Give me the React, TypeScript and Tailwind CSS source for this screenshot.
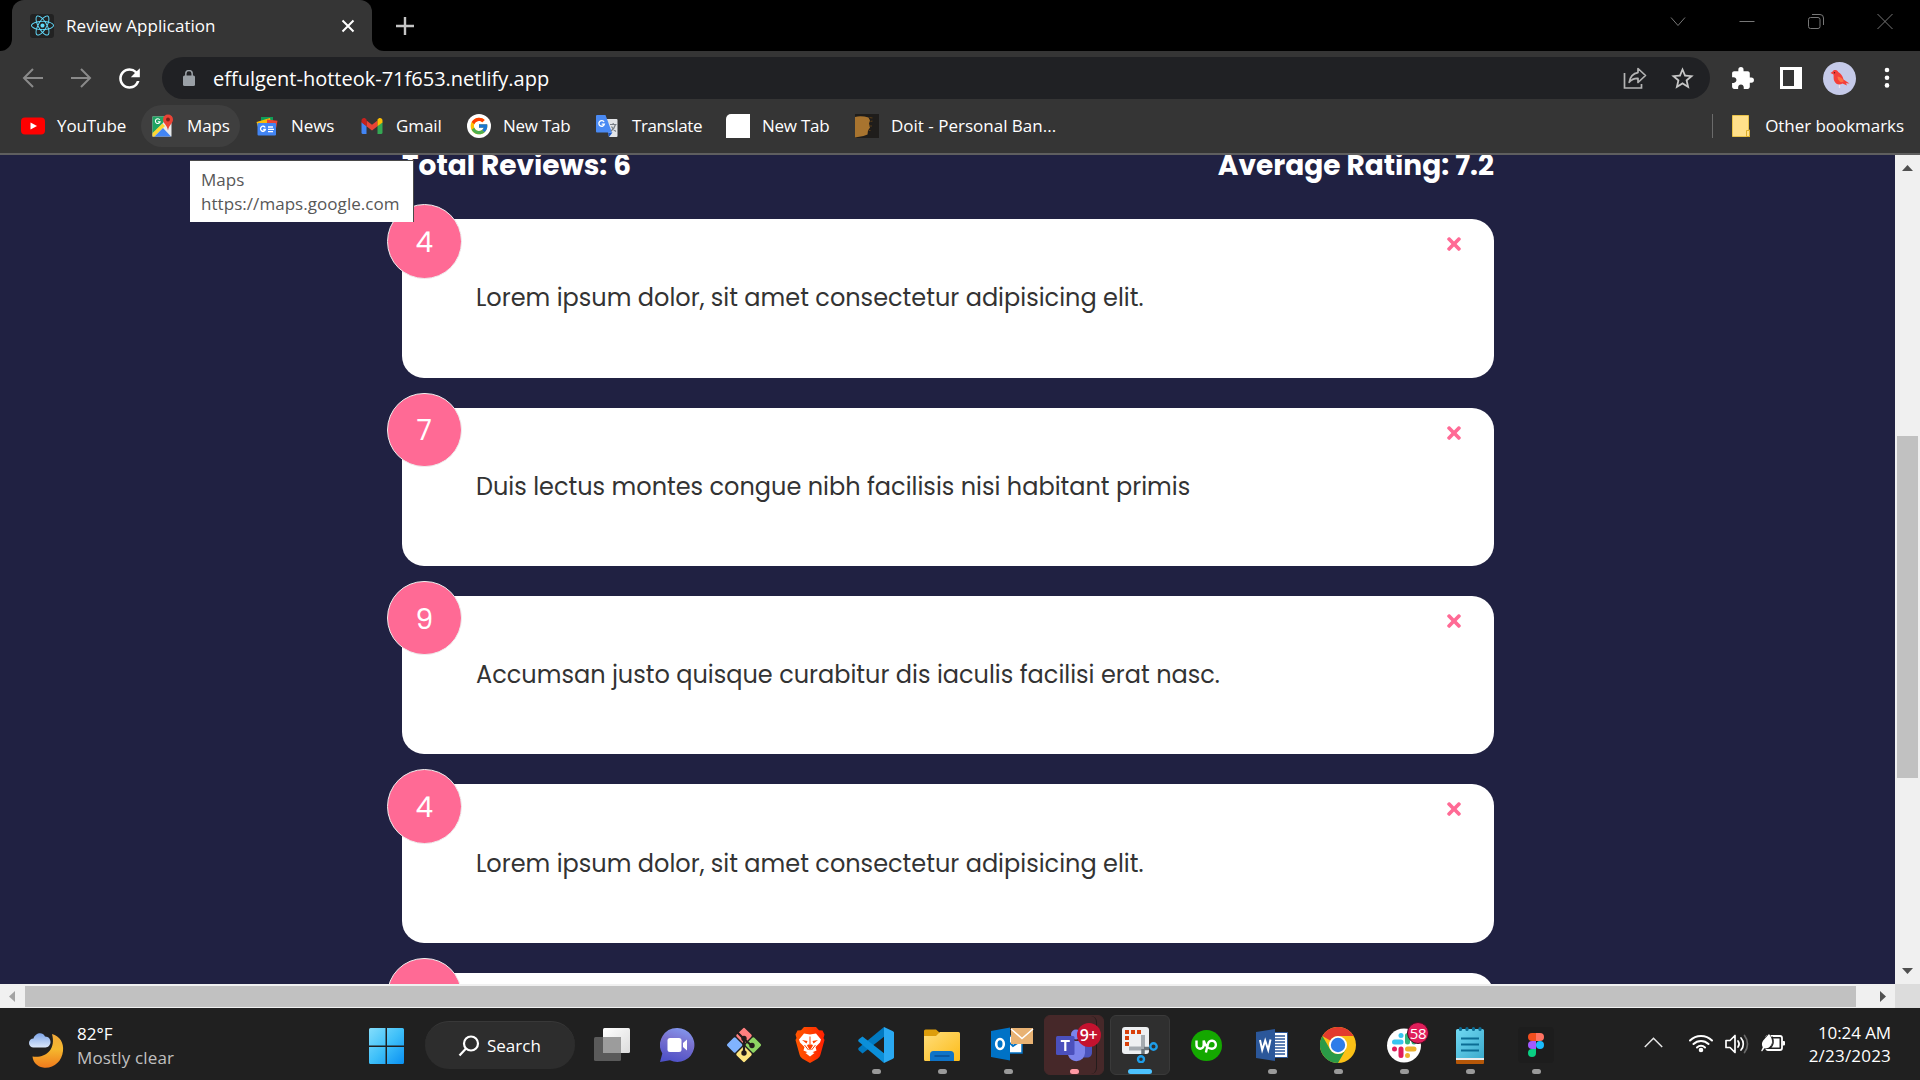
import type { ReactNode } from 'react';
import { FaReact, FaTimes } from 'react-icons/fa';
import { FcGoogle } from 'react-icons/fc';
import { MdExtension, MdRefresh, MdStarBorder } from 'react-icons/md';

/* ---------- Browser: tab strip ---------- */

function TabStrip() {
  return (
    <div className="flex h-[51px] shrink-0 bg-black pl-[12px]">
      <div className="relative flex h-[51px] w-[360px] items-center rounded-t-[12px] bg-[#353535] pl-[18px] pr-[17px]">
        <svg className="absolute -left-[12px] bottom-0 size-[12px]" viewBox="0 0 12 12" fill="#353535">
          <path d="M12 0v12H0A12 12 0 0 0 12 0Z" />
        </svg>
        <svg className="absolute -right-[12px] bottom-0 size-[12px]" viewBox="0 0 12 12" fill="#353535">
          <path d="M0 0v12h12A12 12 0 0 1 0 0Z" />
        </svg>
        <div className="flex size-[24px] items-center justify-center rounded-[3px] bg-[#222222]">
          <FaReact className="size-[23px] text-[#61dafb]" />
        </div>
        <span className="ml-[12px] flex-1 text-[17px] leading-[24px] tracking-[0.05px]">Review Application</span>
        <svg className="size-[14px]" viewBox="0 0 14 14" stroke="#fff" strokeWidth="2" fill="none">
          <path d="M1.5 1.5l11 11M12.5 1.5l-11 11" />
        </svg>
      </div>
      <svg className="ml-[23px] mt-[16px] size-[20px]" viewBox="0 0 20 20" stroke="#c4c4c4" strokeWidth="2.4" fill="none">
        <path d="M10 1v18M1 10h18" />
      </svg>
      <div className="ml-auto flex gap-[53px] pr-[27px] pt-[13px] text-[#777777]">
        <svg className="size-[16px]" viewBox="0 0 16 16" stroke="currentColor" fill="none">
          <path d="M1 4.5l7 8 7-8" />
        </svg>
        <svg className="size-[16px]" viewBox="0 0 16 16" stroke="currentColor" fill="none">
          <path d="M.5 8.5h15" />
        </svg>
        <svg className="size-[16px]" viewBox="0 0 16 16" stroke="currentColor" fill="none">
          <rect x=".5" y="4.5" width="11.5" height="11" rx="2" />
          <path d="M4 1.5h8a3.5 3.5 0 0 1 3.500 3.500v7" />
        </svg>
        <svg className="size-[16px]" viewBox="0 0 16 16" stroke="currentColor" fill="none">
          <path d="M.5 1l15 15M15.500 1l-15 15" />
        </svg>
      </div>
    </div>
  );
}

/* ---------- Browser: address bar ---------- */

function AddressBar() {
  return (
    <div className="flex h-[54px] shrink-0 items-center bg-[#353535] pl-[21px]">
      <svg className="size-[24px]" viewBox="0 0 24 24" stroke="#8a8a8a" strokeWidth="2" fill="none">
        <path d="M22 12H3M12 3l-9 9 9 9" />
      </svg>
      <svg className="ml-[24px] size-[24px]" viewBox="0 0 24 24" stroke="#8a8a8a" strokeWidth="2" fill="none">
        <path d="M2 12h19M12 3l9 9-9 9" />
      </svg>
      <MdRefresh className="ml-[21px] size-[31px] text-white" />
      <div className="ml-[17px] flex h-[42px] w-[1548px] items-center rounded-full bg-[#202124] pl-[20px] pr-[14px]">
        <svg className="size-[16px] w-[14px]" viewBox="0 0 14 16">
          <rect x="1" y="5.500" width="12" height="10.500" rx="1.500" fill="#9aa0a6" />
          <path d="M3.800 6V3.800a3.200 3.200 0 0 1 6.400 0V6" fill="none" stroke="#9aa0a6" strokeWidth="1.500" />
        </svg>
        <span className="ml-[17px] mt-[2px] flex-1 text-[20px] leading-[28px]">effulgent-hotteok-71f653.netlify.app</span>
        <svg className="size-[24px]" viewBox="0 0 24 24" stroke="#b4b4b4" strokeWidth="1.700" fill="none">
          <path d="M1.500 7v15h17v-4" />
          <path d="M15 2.500l7.500 7-7.500 7v-4.200c-4-.2-6.500 1-8.800 4C7 11.500 9.500 7.400 15 6.600Z" strokeLinejoin="round" />
        </svg>
        <MdStarBorder className="ml-[22px] size-[27px] text-[#c6c6c6]" />
      </div>
      <MdExtension className="ml-[20px] size-[25px] text-white" />
      <svg className="ml-[25px] size-[22px]" viewBox="0 0 22 22">
        <path d="M0 0h22v22H0Z" fill="#fff" />
        <path d="M3 3h11v16H3Z" fill="#353535" />
      </svg>
      <svg className="ml-[21px] size-[33px]" viewBox="0 0 33 33">
        <circle cx="16.500" cy="16.500" r="16.500" fill="#c5cae9" />
        <path d="M16.500 21v5" stroke="#ece4f0" strokeWidth="1.300" />
        <path d="M7.500 11l2.200-1.500c1-2 4.300-2 5.500.5 2.500 1.500 4.600 4 5.300 7.500l6 4-3.500-.2 1 2.200-4.500-2c-3 2-6.500 1.200-8.200-2.500-1-2-.5-4.500-.8-6.500l-2-1Z" fill="#f4403a" />
        <path d="M14.500 14.500c3 .2 5.500 2 6.300 5l-2.800.7c-2.200-1-3.500-3.200-3.500-5.700Z" fill="#ff7043" />
        <circle cx="11.500" cy="10.800" r=".7" fill="#5b1414" />
      </svg>
      <svg className="ml-[26px] h-[22px] w-[10px]" viewBox="0 0 10 22" fill="#fff">
        <circle cx="5" cy="3" r="2.300" />
        <circle cx="5" cy="10.700" r="2.300" />
        <circle cx="5" cy="18.400" r="2.300" />
      </svg>
    </div>
  );
}

/* ---------- Browser: bookmarks ---------- */

function YouTubeIcon() {
  return (
    <svg className="size-[24px]" viewBox="0 0 24 24">
      <rect x="0" y="3.500" width="24" height="17" rx="4" fill="#f00" />
      <path d="M9.500 8.500v7l6.500-3.500Z" fill="#fff" />
    </svg>
  );
}

function MapsIcon() {
  return (
    <svg className="size-[24px]" viewBox="0 0 24 24">
      <path d="M1.500 2.500h19v20h-19Z" fill="#e8eaed" />
      <path d="M1.500 2.500h14L12 9 1.500 20Z" fill="#1fa463" />
      <path d="M1.500 19L11.500 9.500l2.500 2.500L3.500 22.500h-2Z" fill="#fdd835" />
      <path d="M3.500 22.500l8.500-8.500 8 8.500Z" fill="#4285f4" />
      <path d="M8.800 5.800a2.400 2.400 0 1 0 .3 2H6.800" fill="none" stroke="#fff" strokeWidth="1.100" />
      <path d="M17 .5a5 5 0 0 0-5 5c0 4 4 5 5 11 1-6 5-7 5-11a5 5 0 0 0-5-5Z" fill="#ea4335" />
      <circle cx="17" cy="5.500" r="1.900" fill="#7d1f18" />
    </svg>
  );
}

function NewsIcon() {
  return (
    <svg className="size-[24px]" viewBox="0 0 24 24">
      <path d="M6 3h12v6H6Z" fill="#0f9d58" />
      <path d="M1.500 8L15 4l1 5-13 4Z" fill="#fdbc05" />
      <path d="M12 5.500l10.500 1.300-1.500 8-9-2Z" fill="#ea4335" />
      <rect x="2.500" y="9" width="18.500" height="12.500" rx="1" fill="#4285f4" />
      <path d="M10.200 13.500a2.500 2.500 0 1 0 .2 2H8.200M13 13h5M13 15.300h6M13 17.600h5" fill="none" stroke="#fff" strokeWidth="1.300" />
    </svg>
  );
}

function GmailIcon() {
  return (
    <svg className="size-[24px]" viewBox="0 0 24 24">
      <path d="M1.500 8l5 4v8H3a1.500 1.500 0 0 1-1.500-1.500Z" fill="#4285f4" />
      <path d="M22.500 8l-5 4v8H21a1.500 1.500 0 0 0 1.500-1.500Z" fill="#34a853" />
      <path d="M6.500 6.500L12 10.700l5.500-4.200v5.800L12 16.500l-5.500-4.200Z" fill="#ea4335" />
      <path d="M1.500 6.500c0-2 2.200-3.200 3.900-2l1.100.9v6.900l-5-3.800Z" fill="#c5221f" />
      <path d="M22.500 6.500c0-2-2.200-3.200-3.900-2l-1.100.9v6.900l5-3.800Z" fill="#fbbc04" />
    </svg>
  );
}

function GoogleIcon() {
  return (
    <div className="flex size-[24px] items-center justify-center rounded-full bg-white">
      <FcGoogle className="size-[20px]" />
    </div>
  );
}

function TranslateIcon() {
  return (
    <svg className="size-[24px]" viewBox="0 0 24 24">
      <path d="M10 5h10.500a1 1 0 0 1 1 1v16a1 1 0 0 1-1 1H13Z" fill="#e3e5e8" />
      <path d="M12 18.500h4.500L13 23Z" fill="#1a56c4" />
      <path d="M1 1H9.500l6.500 17.500H1a1 1 0 0 1-1-1V2a1 1 0 0 1 1-1Z" fill="#4a8af4" />
      <path d="M8.100 8a2.800 2.800 0 1 0 .3 2.200H5.700" fill="none" stroke="#fff" strokeWidth="1.300" />
      <path d="M14 10.500h6.500M17.200 9v1.500M19.500 10.500c-.8 3-2.500 5-4.500 6.500M15.500 12.500c1 2 2.500 3.800 4.500 5" fill="none" stroke="#7a8087" strokeWidth="1.200" />
    </svg>
  );
}

function BlankPageIcon() {
  return <div className="size-[24px] rounded-tl-[5px] bg-white" />;
}

function FistIcon() {
  return (
    <svg className="size-[24px]" viewBox="0 0 24 24">
      <path d="M0 0h24v24H0Z" fill="#1f1d1b" />
      <path d="M0 3c4-1.200 9-.8 13.500.5l1.500 3-1 3 1 4-2 3-.5 4-4 1.500L0 23.500Z" fill="#a8742f" />
      <path d="M14.500 3.500l3 .5M15.500 7.500l2-.5M14.500 12h2.500M13.500 16.500h2" stroke="#5a3c16" strokeWidth="1.200" />
    </svg>
  );
}

function Bookmark({ icon, label, className }: { icon: ReactNode; label: string; className: string }) {
  return (
    <div className={`${className} flex h-[42px] items-center gap-[12px] pl-[10px]`}>
      {icon}
      <span className="whitespace-nowrap">{label}</span>
    </div>
  );
}

function BookmarksBar() {
  return (
    <div className="relative flex h-[48px] shrink-0 items-start bg-[#353535] pl-[11px] pr-[16px] text-[17px] leading-[24px] tracking-[-0.1px]">
      <Bookmark icon={<YouTubeIcon />} label="YouTube" className="w-[130px]" />
      <Bookmark icon={<MapsIcon />} label="Maps" className="mr-[5px] w-[99px] rounded-full bg-[#3f3f3f]" />
      <Bookmark icon={<NewsIcon />} label="News" className="w-[105px]" />
      <Bookmark icon={<GmailIcon />} label="Gmail" className="w-[107px]" />
      <Bookmark icon={<GoogleIcon />} label="New Tab" className="w-[129px] tracking-[-0.25px]" />
      <Bookmark icon={<TranslateIcon />} label="Translate" className="w-[130px] tracking-[-0.4px]" />
      <Bookmark icon={<BlankPageIcon />} label="New Tab" className="w-[129px] tracking-[-0.25px]" />
      <Bookmark icon={<FistIcon />} label="Doit - Personal Ban..." className="flex-1 tracking-[0px]" />
      <div className="flex h-[42px] items-center">
        <div className="mr-[19px] h-[24px] w-px bg-[#6b6b6b]" />
        <svg className="mr-[15px] h-[22px] w-[18px]" viewBox="0 0 18 22">
          <path d="M.5.5h16v14l1 .5v6.500H.5Z" fill="#ffe08a" stroke="#e8c24a" />
          <path d="M14.500 21.500v-6h3v6Z" fill="#ffe08a" stroke="#dbae2b" />
        </svg>
        <span className="tracking-[-0.05px]">Other bookmarks</span>
      </div>
      <div className="absolute left-[190px] top-[55px] z-20 h-[62px] w-[224px] border-r border-t border-[#4a4a4a] bg-white pl-[11px] pt-[7px] text-[#575757]">
        <div className="tracking-[0px]">Maps</div>
        <div className="tracking-[0.05px]">https://maps.google.com</div>
      </div>
    </div>
  );
}

/* ---------- Page ---------- */

const reviews = [
  { rating: 4, text: 'Lorem ipsum dolor, sit amet consectetur adipisicing elit.' },
  { rating: 7, text: 'Duis lectus montes congue nibh facilisis nisi habitant primis' },
  { rating: 9, text: 'Accumsan justo quisque curabitur dis iaculis facilisi erat nasc.' },
  { rating: 4, text: 'Lorem ipsum dolor, sit amet consectetur adipisicing elit.' },
  { rating: null, text: '' },
];

function ReviewCard({ rating, text }: { rating: number | null; text: string }) {
  return (
    <div className="relative flex h-[158.35px] shrink-0 items-center rounded-[22px] bg-white pl-[74px] text-[24px] text-[#333333]">
      <div className="absolute -left-[15px] -top-[15px] flex size-[74.5px] items-center justify-center rounded-full border border-[#eeeeee] bg-[#ff6a95] pt-[3px] text-[28px] text-white">
        {rating}
      </div>
      <FaTimes className="absolute right-[30px] top-[15px] size-[20px] text-[#ff6a95]" />
      <span className="whitespace-nowrap">{text}</span>
    </div>
  );
}

function ReviewPage() {
  return (
    <div className="h-[829px] w-[1895px] overflow-hidden bg-[#202142] font-[Poppins,Montserrat,Inter,sans-serif]">
      <div className="ml-[402px] flex w-[1092px] flex-col">
        <div className="-mt-[9px] flex h-[73.3px] shrink-0 items-start justify-between text-[28px] font-bold leading-[40px] text-white">
          <span>Total Reviews: 6</span>
          <span>Average Rating: 7.2</span>
        </div>
        <div className="flex flex-col gap-[30px]">
          {reviews.map((r, i) => (
            <ReviewCard key={i} rating={r.rating} text={r.text} />
          ))}
        </div>
      </div>
    </div>
  );
}

function VerticalScrollbar() {
  return (
    <div className="flex h-[829px] w-[25px] flex-col items-center bg-[#f0f0f0]">
      <svg className="mt-[10px] h-[6px] w-[11px]" viewBox="0 0 11 6" fill="#505050">
        <path d="M5.500 0L11 6H0Z" />
      </svg>
      <div className="mt-[265px] h-[342px] w-[21px] bg-[#c1c1c1]" />
      <svg className="mb-[10px] mt-auto h-[6px] w-[11px]" viewBox="0 0 11 6" fill="#505050">
        <path d="M5.500 6L11 0H0Z" />
      </svg>
    </div>
  );
}

function HorizontalScrollbar() {
  return (
    <div className="flex h-[24px] shrink-0">
      <div className="flex w-[1895px] items-center bg-[#f0f0f0]">
        <svg className="ml-[9px] h-[11px] w-[6px]" viewBox="0 0 6 11" fill="#a3a3a3">
          <path d="M0 5.500L6 0v11Z" />
        </svg>
        <div className="ml-[10px] mt-px h-[21px] w-[1831px] bg-[#c1c1c1]" />
        <svg className="ml-[24px] h-[11px] w-[6px]" viewBox="0 0 6 11" fill="#505050">
          <path d="M6 5.500L0 0v11Z" />
        </svg>
      </div>
      <div className="flex-1 bg-[#dcdcdc]" />
    </div>
  );
}

/* ---------- Taskbar icons ---------- */

function WeatherIcon() {
  return (
    <svg className="h-[38px] w-[35px]" viewBox="0 0 35 38">
      <defs>
        <linearGradient id="moon" x1="0" y1="0" x2="0" y2="1">
          <stop offset="0" stopColor="#f2a93b" />
          <stop offset=".45" stopColor="#f5b82e" />
          <stop offset="1" stopColor="#f07a1c" />
        </linearGradient>
        <linearGradient id="cloud" x1="0" y1="0" x2="0" y2="1">
          <stop offset="0" stopColor="#7fa6e8" />
          <stop offset="1" stopColor="#dbe7fa" />
        </linearGradient>
      </defs>
      <path d="M23 3c8 2 12 9 11 17-1 11-10 18-20 16.500C8 35.500 4 31 3.500 25.500c12 2 24-6 19.500-22.500Z" fill="url(#moon)" />
      <path d="M4.500 16.500a4.500 4.500 0 0 1 0-9C6 2 13.500 0 16 5.500c4 0 5.500 3 5.500 5.500s-2 5.500-5 5.500Z" fill="url(#cloud)" />
    </svg>
  );
}

function StartIcon() {
  return (
    <svg className="h-[36px] w-[35px]" viewBox="0 0 35 36">
      <defs>
        <linearGradient id="start" x1="0" y1="0" x2="1" y2="1">
          <stop offset="0" stopColor="#84defc" />
          <stop offset=".5" stopColor="#3fc0f9" />
          <stop offset="1" stopColor="#0a90f2" />
        </linearGradient>
      </defs>
      <path d="M1.500 0H16.500v17.500H0V1.500A1.500 1.500 0 0 1 1.500 0ZM18 0h15.500A1.500 1.500 0 0 1 35 1.500v16H18ZM0 19h16.500v17h-15A1.500 1.500 0 0 1 0 34.500ZM18 19h17v15.500a1.500 1.500 0 0 1-1.500 1.500H18Z" fill="url(#start)" />
    </svg>
  );
}

function TaskViewIcon() {
  return (
    <svg className="size-[36px]" viewBox="0 0 36 36">
      <defs>
        <linearGradient id="tv" x1="0" y1="0" x2="1" y2="1">
          <stop offset="0" stopColor="#fff" />
          <stop offset="1" stopColor="#dcdcdc" />
        </linearGradient>
      </defs>
      <rect x="9" y="1" width="27" height="25" rx="1.500" fill="url(#tv)" />
      <rect x="0" y="10" width="27" height="24" rx="1.500" fill="#5a5a5a" />
      <path d="M9 10h18v16H9Z" fill="#9c9c9c" />
    </svg>
  );
}

function ChatIcon() {
  return (
    <svg className="size-[36px]" viewBox="0 0 36 36">
      <defs>
        <linearGradient id="chat" x1=".7" y1="0" x2=".4" y2="1">
          <stop offset="0" stopColor="#8298ee" />
          <stop offset=".4" stopColor="#7a72d0" />
          <stop offset="1" stopColor="#4f52c8" />
        </linearGradient>
      </defs>
      <path d="M17.500 1a17 17 0 1 1-7.500 32.300L0 35l2.300-8.500A17 17 0 0 1 17.500 1Z" fill="url(#chat)" />
      <rect x="7.500" y="11" width="14" height="14" rx="2.500" fill="#fff" />
      <path d="M23 16l4-3.500v11L23 20Z" fill="#fff" />
    </svg>
  );
}

function GitIcon() {
  return (
    <svg className="size-[36px]" viewBox="0 0 36 36">
      <g transform="rotate(45 18 18)">
        <rect x="5.500" y="5.500" width="11.800" height="11.800" rx="1.500" fill="#ff7f7f" />
        <rect x="18.700" y="5.500" width="11.800" height="11.800" rx="1.500" fill="#8ed463" />
        <rect x="5.500" y="18.700" width="11.800" height="11.800" rx="1.500" fill="#80b3ff" />
        <rect x="18.700" y="18.700" width="11.800" height="11.800" rx="1.500" fill="#ffe680" />
      </g>
      <path d="M11 5l7 7v14M18 12l8 7" stroke="#241c1c" strokeWidth="2.200" fill="none" />
      <circle cx="18" cy="11.500" r="2.700" fill="#241c1c" />
      <circle cx="18" cy="26" r="2.700" fill="#241c1c" />
      <circle cx="26" cy="18.500" r="2.700" fill="#241c1c" />
    </svg>
  );
}

function BraveIcon() {
  return (
    <svg className="size-[36px]" viewBox="0 0 36 36">
      <defs>
        <linearGradient id="brave" x1="0" y1="0" x2="1" y2="0">
          <stop offset="0" stopColor="#ff5601" />
          <stop offset=".5" stopColor="#ff4000" />
          <stop offset="1" stopColor="#ff1f01" />
        </linearGradient>
      </defs>
      <path d="M12 0h12l3 3.200 3.500.3 2 4-1 3.500 1 2-4 14.500c-.5 2-1.500 3-3 4.200L18 36l-7.500-4.300c-1.500-1.200-2.500-2.200-3-4.200l-4-14.500 1-2-1-3.500 2-4 3.500-.3Z" fill="url(#brave)" />
      <path d="M12 6.500l6 1 6-1 5 6-1 3-4.500 4.500 1 3.500-3.500 1.500-3 2.500-3-2.500-3.500-1.500 1-3.500L8 15.500l-1-3Z" fill="#fff" />
      <path d="M10 13l5.500 1-1 2.500ZM26 13l-5.500 1 1 2.500ZM15 18.500l3 5 3-5-1-1h-4Z" fill="#ff4000" />
      <path d="M18 9.500v8M12.500 18l4 5M23.500 18l-4 5" stroke="#ff4000" strokeWidth="1" />
      <path d="M13.500 26l4.500-2 4.500 2-4.500 3.500Z" fill="#fff" />
    </svg>
  );
}

function VsCodeIcon() {
  return (
    <svg className="size-[36px]" viewBox="0 0 36 36">
      <path d="M26 0l1 9-22.500 17.500-3.700-3.300c-.8-.8-.8-1.600 0-2.400Z" fill="#0179c0" />
      <path d="M26 36l1-9L4.500 9.500.8 12.200c-.8.800-.8 1.800 0 2.600Z" fill="#0b8fd9" />
      <path d="M26 0l8.500 4c1 .5 1.500 1 1.500 2v24c0 1-.5 1.500-1.500 2L26 36Z" fill="#2aa9f2" />
    </svg>
  );
}

function ExplorerIcon() {
  return (
    <svg className="size-[36px]" viewBox="0 0 36 36">
      <defs>
        <linearGradient id="folder" x1="0" y1="0" x2="1" y2="1">
          <stop offset="0" stopColor="#ffdd7a" />
          <stop offset="1" stopColor="#fcbc19" />
        </linearGradient>
      </defs>
      <path d="M0 4a1.500 1.500 0 0 1 1.500-1.500H12L16 6v4H0Z" fill="#dd9d0b" />
      <path d="M0 9h12l4-4h18.500A1.500 1.500 0 0 1 36 6.500v26a1.500 1.500 0 0 1-1.500 1.500h-33A1.500 1.500 0 0 1 0 32.500Z" fill="url(#folder)" />
      <path d="M6 34v-6.500a3.500 3.500 0 0 1 3.500-3.500h17a3.500 3.500 0 0 1 3.500 3.500V34Z" fill="#0f74c8" />
      <path d="M11 29h14" stroke="#0a4f94" strokeWidth="1.500" strokeLinecap="round" />
    </svg>
  );
}

function OutlookIcon() {
  return (
    <svg className="h-[36px] w-[44px]" viewBox="0 0 44 36">
      <path d="M19 9h13v17H19Z" fill="#fff" stroke="#0072c6" strokeWidth="1.500" />
      <path d="M20 16l3 3 6-4" stroke="#0072c6" strokeWidth="2" fill="none" />
      <path d="M1 4l19-3.500v33L1 30Z" fill="#0072c6" />
      <ellipse cx="10" cy="17" rx="3.800" ry="5" fill="none" stroke="#fff" strokeWidth="2.600" />
      <path d="M21 1h22v16H21Z" fill="#e8b273" />
      <path d="M21 2l11 9.500L43 2" stroke="#fff" strokeWidth="1.500" fill="none" />
    </svg>
  );
}

function TeamsIcon() {
  return (
    <div className="relative h-[36px] w-[36px]">
      <svg className="size-[36px]" viewBox="0 0 36 36">
        <circle cx="20" cy="7.500" r="5" fill="#7b83eb" />
        <path d="M27 14h9v11c0 4-2 5.500-5 5.500h-4Z" fill="#4b53bc" />
        <path d="M12 14h17v12a8.700 8.700 0 0 1-17 2Z" fill="#7b83eb" />
        <rect x="0" y="9" width="18.500" height="19" rx="1.500" fill="#4b50bd" />
        <path d="M4.800 14h9M9.300 14v10" stroke="#fff" strokeWidth="2.200" />
      </svg>
      <div className="absolute left-[21px] -top-[4px] flex size-[24px] items-center justify-center rounded-full bg-[#c4122f] text-[16px] font-semibold leading-none tracking-[-0.5px] text-white">
        9+
      </div>
    </div>
  );
}

function SnippingIcon() {
  return (
    <svg className="size-[36px]" viewBox="0 0 36 36">
      <rect x="0" y="0" width="27" height="27" rx="3" fill="#eef0f2" />
      <path d="M3 3h4v4H3ZM9 3h4v4H9ZM15 3h4v4h-4ZM3 9h4v4H3ZM3 15h4v4H3Z" fill="#d9400a" />
      <path d="M21 8v15M7 21.500h16" stroke="#a5abb1" strokeWidth="4" />
      <path d="M21 22v5M22 21.500h5" stroke="#6c747b" strokeWidth="3.500" />
      <circle cx="31.500" cy="19.500" r="3.200" stroke="#1e9de8" strokeWidth="2.400" fill="none" />
      <circle cx="19" cy="32.200" r="3" stroke="#1e9de8" strokeWidth="2.400" fill="none" />
    </svg>
  );
}

function UpworkIcon() {
  return (
    <svg className="size-[31px]" viewBox="0 0 31 31">
      <circle cx="15.500" cy="15.500" r="15.500" fill="#14a800" />
      <path d="M5.500 10.500v4.700a3.600 3.600 0 0 0 7.200 0v-4.700c1.300 4.300 4 8.200 8.200 8.200a4 4 0 1 0-4-4.700l-2 8.500" fill="none" stroke="#fff" strokeWidth="2.400" />
    </svg>
  );
}

function WordIcon() {
  return (
    <svg className="size-[32px]" viewBox="0 0 32 32">
      <path d="M17 3.500h14.500v25H17Z" fill="#fff" stroke="#2b579a" />
      <path d="M19 7h10M19 10h10M19 13h10M19 16h10M19 19h10M19 22h10M19 25h10" stroke="#2b579a" strokeWidth="1.500" />
      <path d="M0 3l19-3v32L0 29Z" fill="#2b579a" />
      <path d="M4 11l2.200 10L9.200 11.500 12.200 21l2.300-10.500" stroke="#fff" strokeWidth="2" fill="none" />
    </svg>
  );
}

function ChromeIcon() {
  return (
    <svg className="size-[36px]" viewBox="0 0 36 36">
      <circle cx="18" cy="18" r="18" fill="#fbc116" />
      <path d="M2.400 9A18 18 0 0 1 33.600 9H18a9 9 0 0 0-7.800 4.500Z" fill="#e33b2e" />
      <path d="M2.400 9A18 18 0 0 0 18 36l7.800-13.500A9 9 0 0 1 10.200 22.500Z" fill="#2a9a47" />
      <circle cx="18" cy="18" r="9" fill="#fff" />
      <circle cx="18" cy="18" r="7.200" fill="#2f7de9" />
    </svg>
  );
}

function SlackIcon() {
  return (
    <div className="relative size-[36px]">
      <svg className="size-[36px]" viewBox="0 0 36 36">
        <circle cx="18" cy="18.500" r="17" fill="#fff" />
        <g strokeWidth="5" strokeLinecap="round" fill="none">
          <path d="M15 8.500v0" stroke="#36c5f0" />
          <path d="M8.500 15h6.500" stroke="#36c5f0" />
          <path d="M21.500 8.500v6.500M28 15v0" stroke="#2eb67d" />
          <path d="M21.500 22H28M21.500 28.500v0" stroke="#ecb22e" />
          <path d="M15 22v6.500M8.500 22v0" stroke="#e01e5a" />
        </g>
      </svg>
      <div className="absolute -top-[5px] left-[21px] flex size-[22px] items-center justify-center rounded-full border border-[#4a0a20] bg-[#e01e5a] text-[15px] leading-none tracking-[-0.3px] text-white">
        58
      </div>
    </div>
  );
}

function NotepadIcon() {
  return (
    <svg className="h-[38px] w-[28px]" viewBox="0 0 28 38">
      <defs>
        <linearGradient id="note" x1="0" y1="0" x2="1" y2="1">
          <stop offset="0" stopColor="#70d8f2" />
          <stop offset="1" stopColor="#3cabcd" />
        </linearGradient>
      </defs>
      <path d="M0 30h28v7a1 1 0 0 1-1 1H1a1 1 0 0 1-1-1Z" fill="#b55708" />
      <path d="M0 29h28v5H0Z" fill="#e9ecee" />
      <path d="M0 4.500A1.500 1.500 0 0 1 1.500 3h25A1.500 1.500 0 0 1 28 4.500V32H0Z" fill="url(#note)" />
      <path d="M5 12.500h18M5 18.500h18M5 24.500h18" stroke="#0b6c94" strokeWidth="2" />
      <path d="M4.500 2.500v1M11 2.500v1M17.500 2.500v1M24 2.500v1" stroke="#0b6c94" strokeWidth="3.200" strokeLinecap="round" />
    </svg>
  );
}

function FigmaIcon() {
  return (
    <div className="flex size-[36px] items-center justify-center rounded-[4px] bg-[#1d1d1d]">
      <svg className="h-[24px] w-[16px]" viewBox="0 0 16 24">
        <path d="M4 0h4v8H4a4 4 0 0 1 0-8Z" fill="#f24e1e" />
        <path d="M8 0h4a4 4 0 0 1 0 8H8Z" fill="#ff7262" />
        <path d="M4 8h4v8H4a4 4 0 0 1 0-8Z" fill="#a259ff" />
        <circle cx="12" cy="12" r="4" fill="#1abcfe" />
        <path d="M4 16h4v4a4 4 0 1 1-4-4Z" fill="#0acf83" />
      </svg>
    </div>
  );
}

/* ---------- Taskbar ---------- */

type AppState = 'idle' | 'running' | 'alert' | 'active';

const cellStyle: Record<AppState, string> = {
  idle: 'border-transparent',
  running: 'border-transparent',
  alert: 'border-[#462829] bg-[#462829]',
  active: 'border-[#3a3a3a] bg-[#2f2f2f]',
};

const markStyle: Record<AppState, string> = {
  idle: 'w-0',
  running: 'w-[9px] bg-[#9a9a9a]',
  alert: 'w-[9px] bg-[#ff99a4]',
  active: 'w-[24px] bg-[#4cc2ff]',
};

const apps: { icon: ReactNode; state: AppState }[] = [
  { icon: <TaskViewIcon />, state: 'idle' },
  { icon: <ChatIcon />, state: 'idle' },
  { icon: <GitIcon />, state: 'idle' },
  { icon: <BraveIcon />, state: 'idle' },
  { icon: <VsCodeIcon />, state: 'running' },
  { icon: <ExplorerIcon />, state: 'running' },
  { icon: <div className="ml-[8px]"><OutlookIcon /></div>, state: 'running' },
  { icon: <div className="-ml-px"><TeamsIcon /></div>, state: 'alert' },
  { icon: <SnippingIcon />, state: 'active' },
  { icon: <UpworkIcon />, state: 'idle' },
  { icon: <WordIcon />, state: 'running' },
  { icon: <ChromeIcon />, state: 'running' },
  { icon: <SlackIcon />, state: 'running' },
  { icon: <NotepadIcon />, state: 'running' },
  { icon: <FigmaIcon />, state: 'running' },
];

function Taskbar() {
  return (
    <div className="flex h-[72px] shrink-0 bg-[#202020] pt-[7px] text-[17px] leading-[24px]">
      <div className="flex w-[369px] items-start pl-[29px]">
        <div className="mt-[16px]"><WeatherIcon /></div>
        <div className="ml-[13px] mt-[7px]">
          <div>82°F</div>
          <div className="tracking-[0.15px] text-[#c0c0c0]">Mostly clear</div>
        </div>
      </div>
      <div className="mt-[13px] w-[56px]"><StartIcon /></div>
      <div className="mt-[6px] flex h-[48px] w-[150px] items-center rounded-full border-t border-[#383838] bg-[#2d2d2d] pl-[33px]">
        <svg className="size-[22px]" viewBox="0 0 22 22" stroke="#fff" strokeWidth="2.200" fill="none">
          <circle cx="13" cy="8.500" r="7" />
          <path d="M8 13.500l-6.500 7" />
        </svg>
        <span className="ml-[7px]">Search</span>
      </div>
      <div className="ml-[7px] flex gap-[6px]">
        {apps.map((app, i) => (
          <div key={i} className={`${cellStyle[app.state]} relative flex h-[60px] w-[60px] items-center justify-center rounded-[6px] border`}>
            {app.state === 'alert' && <div className="absolute inset-y-0 left-0 right-[6px] rounded-[6px] border-r border-[#241c1c]" />}
            <div className="relative">{app.icon}</div>
            <div className="absolute inset-x-0 -bottom-px flex justify-center">
              <div className={`${markStyle[app.state]} mb-px h-[5px] rounded-full`} />
            </div>
          </div>
        ))}
      </div>
      <div className="ml-auto flex items-start pr-[29px]">
        <svg className="mr-[26px] mt-[22px] h-[11px] w-[19px]" viewBox="0 0 19 11" stroke="#e8e8e8" strokeWidth="1.500" fill="none">
          <path d="M.8 10l8.700-8.700 8.700 8.700" />
        </svg>
        <svg className="mr-[12px] mt-[18px] h-[20px] w-[24px]" viewBox="0 0 24 20" stroke="#fff" strokeWidth="2" fill="none" strokeLinecap="round">
          <path d="M1 7.500a15.500 15.500 0 0 1 22 0M4.500 11a10.600 10.600 0 0 1 15 0M8 14.500a5.700 5.700 0 0 1 8 0" />
          <circle cx="12" cy="17" r="1.300" fill="#fff" />
        </svg>
        <svg className="mr-[12px] mt-[18px] h-[22px] w-[24px]" viewBox="0 0 24 22" stroke="#fff" strokeWidth="1.700" fill="none" strokeLinejoin="round" strokeLinecap="round">
          <path d="M1 7.500h4L10 2.500v17l-5-5H1Z" />
          <path d="M13 8a5 5 0 0 1 0 6M16 5a9 9 0 0 1 0 12" />
          <path d="M19.500 2.500c4 5 4 12 0 17" stroke="#6a6a6a" />
        </svg>
        <svg className="mt-[19px] h-[19px] w-[24px]" viewBox="0 0 24 19">
          <rect x="5" y="2" width="16" height="14" rx="2" fill="none" stroke="#fff" strokeWidth="1.800" />
          <path d="M21.500 7H23a1 1 0 0 1 1 1v2.500a1 1 0 0 1-1 1h-1.500ZM12 4.500h6.500v9H10Z" fill="#fff" />
          <path d="M8 0c4 5 4 10 .5 13-1.800 1.500-4 1.600-5 1.300L1 17.500l-.8-.8 1.600-3.400C-1 8 3.500 5.500 8 0Z" fill="#fff" stroke="#202020" strokeWidth="1.200" paintOrder="stroke" />
          <path d="M11 2.500c2 4.500 1.500 8-1 11" fill="none" stroke="#202020" strokeWidth="1.200" />
        </svg>
        <div className="ml-[24px] mt-[6px] flex w-[82px] flex-col items-end">
          <span className="tracking-[-0.1px]">10:24 AM</span>
          <span className="mt-[-1px] tracking-[0.2px]">2/23/2023</span>
        </div>
      </div>
    </div>
  );
}

export default function App() {
  return (
    <div className="flex h-[1080px] w-[1920px] flex-col overflow-hidden bg-black font-['Open_Sans','Noto_Sans',sans-serif] text-white">
      <TabStrip />
      <AddressBar />
      <BookmarksBar />
      <div className="h-[2px] shrink-0 bg-[#5f5f5f]" />
      <div className="flex h-[829px] shrink-0">
        <ReviewPage />
        <VerticalScrollbar />
      </div>
      <HorizontalScrollbar />
      <Taskbar />
    </div>
  );
}
